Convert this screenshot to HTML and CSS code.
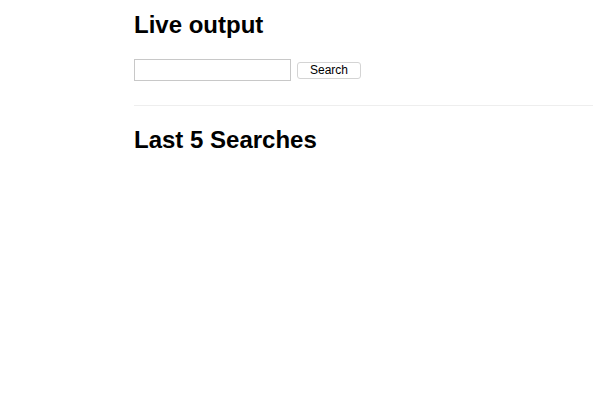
FILE: index.html
```html
<!DOCTYPE html>
<html>
<head>
<meta charset="utf-8">
<link rel="stylesheet" href="styles.css">
</head>
<body>
<main class="page">
  <h1 class="title">Live output</h1>
  <form class="search">
    <input class="search-input" type="text">
    <button class="search-button" type="button">Search</button>
  </form>
  <hr class="divider">
  <h1 class="title">Last 5 Searches</h1>
</main>
</body>
</html>
```

FILE: styles.css
```css
html, body {
  margin: 0;
  padding: 0;
  background: #fff;
}
body {
  font-family: "Liberation Sans", Arial, sans-serif;
  color: #000;
}
.page {
  padding-left: 134px;
  padding-top: 10px;
}
.title {
  margin: 0;
  font-size: 24px;
  font-weight: bold;
  line-height: 30px;
}
.search {
  display: flex;
  align-items: center;
  gap: 6px;
  margin-top: 19px;
}
.search-input {
  box-sizing: border-box;
  width: 157px;
  height: 22px;
  margin: 0;
  border: 1px solid #c8c8c8;
  padding: 0 4px;
}
.search-button {
  box-sizing: border-box;
  width: 64px;
  height: 17px;
  margin: 0;
  padding: 0;
  border: 1px solid #d4d4d4;
  border-radius: 3px;
  background: #fff;
  font-family: "Liberation Sans", Arial, sans-serif;
  font-size: 12px;
  line-height: 15px;
  color: #000;
}
.divider {
  margin: 24px 0 19px;
  border: 0;
  border-top: 1px solid #eee;
}
```
